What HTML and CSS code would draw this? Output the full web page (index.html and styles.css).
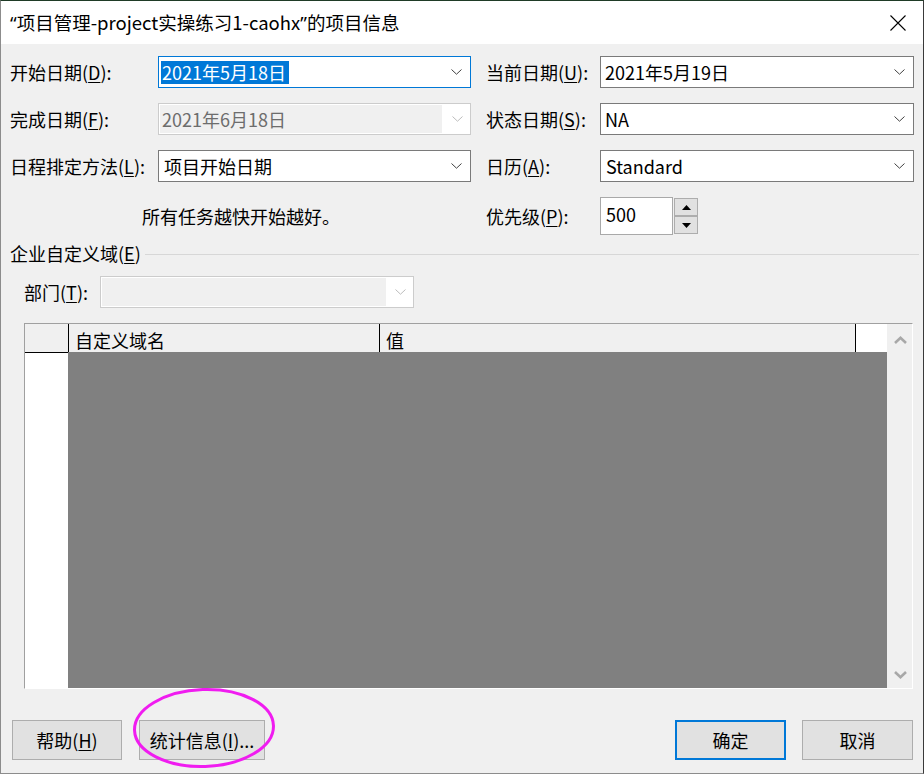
FILE: index.html
```html
<!DOCTYPE html>
<html lang="zh-CN">
<head>
<meta charset="utf-8">
<title>项目信息</title>
<link rel="stylesheet" href="styles.css">
</head>
<body>
<div class="window">
  <div class="titlebar">
    <span class="title"><span class="q">“</span>项目管理-project实操练习1-caohx<span class="q">”</span>的项目信息</span>
    <svg class="close" width="16" height="16" viewBox="0 0 16 16"><path d="M0.5 0.5L15.5 15.5M15.5 0.5L0.5 15.5" stroke="#000" stroke-width="1.1" fill="none"/></svg>
  </div>
  <div class="content">
    <div class="form">
      <div class="lbl">开始日期(<u>D</u>):</div>
      <div class="combo focus"><span class="val sel">2021年5月18日</span><svg class="chev" width="11" height="6" viewBox="0 0 11 6"><path d="M0.5 0.5L5.5 5.2L10.5 0.5" stroke="#404040" fill="none"/></svg></div>
      <div class="lbl right">当前日期(<u>U</u>):</div>
      <div class="combo"><span class="val">2021年5月19日</span><svg class="chev" width="11" height="6" viewBox="0 0 11 6"><path d="M0.5 0.5L5.5 5.2L10.5 0.5" stroke="#404040" fill="none"/></svg></div>

      <div class="lbl">完成日期(<u>F</u>):</div>
      <div class="combo disabled"><span class="val dis">2021年6月18日</span><span class="dropzone"><svg class="chev" width="11" height="6" viewBox="0 0 11 6"><path d="M0.5 0.5L5.5 5.2L10.5 0.5" stroke="#bcbcbc" fill="none"/></svg></span></div>
      <div class="lbl right">状态日期(<u>S</u>):</div>
      <div class="combo"><span class="val">NA</span><svg class="chev" width="11" height="6" viewBox="0 0 11 6"><path d="M0.5 0.5L5.5 5.2L10.5 0.5" stroke="#404040" fill="none"/></svg></div>

      <div class="lbl">日程排定方法(<u>L</u>):</div>
      <div class="combo"><span class="val pad">项目开始日期</span><svg class="chev" width="11" height="6" viewBox="0 0 11 6"><path d="M0.5 0.5L5.5 5.2L10.5 0.5" stroke="#404040" fill="none"/></svg></div>
      <div class="lbl right">日历(<u>A</u>):</div>
      <div class="combo"><span class="val pad">Standard</span><svg class="chev" width="11" height="6" viewBox="0 0 11 6"><path d="M0.5 0.5L5.5 5.2L10.5 0.5" stroke="#404040" fill="none"/></svg></div>

      <div class="note">所有任务越快开始越好。</div>
      <div class="lbl right">优先级(<u>P</u>):</div>
      <div class="spin">
        <div class="spin-input">500</div>
        <div class="spin-btns">
          <div class="spin-btn"><svg width="9" height="5" viewBox="0 0 9 5"><path d="M0 5L4.5 0L9 5Z" fill="#000"/></svg></div>
          <div class="spin-btn"><svg width="9" height="5" viewBox="0 0 9 5"><path d="M0 0L4.5 5L9 0Z" fill="#000"/></svg></div>
        </div>
      </div>
    </div>

    <div class="group">
      <span class="group-title">企业自定义域(<u>E</u>)</span>
      <div class="rule"></div>
    </div>

    <div class="dept">
      <div class="dept-lbl">部门(<u>T</u>):</div>
      <div class="combo disabled dept-combo"><span class="val dis"></span><span class="dropzone"><svg class="chev" width="11" height="6" viewBox="0 0 11 6"><path d="M0.5 0.5L5.5 5.2L10.5 0.5" stroke="#bcbcbc" fill="none"/></svg></span></div>
    </div>

    <div class="grid">
      <div class="grid-main">
        <div class="ghead">
          <div class="rh"></div>
          <div class="hc c1">自定义域名</div>
          <div class="hc c2">值</div>
          <div class="hfill"></div>
        </div>
        <div class="gbody">
          <div class="rhcol"></div>
          <div class="gray"></div>
        </div>
      </div>
      <div class="vscroll">
        <svg width="13" height="8" viewBox="0 0 13 8"><path d="M1 7L6.5 1.8L12 7" stroke="#a8a8a8" stroke-width="2.6" fill="none"/></svg>
        <svg width="13" height="8" viewBox="0 0 13 8"><path d="M1 1L6.5 6.2L12 1" stroke="#a8a8a8" stroke-width="2.6" fill="none"/></svg>
      </div>
    </div>

    <div class="buttons">
      <div class="btn-group">
        <div class="btn w110">帮助(<u>H</u>)</div>
        <div class="btn w126">统计信息(<u>I</u>)...</div>
      </div>
      <div class="btn-group g16">
        <div class="btn w111 default">确定</div>
        <div class="btn w111">取消</div>
      </div>
    </div>
  </div>
  <svg class="annot" width="150" height="88" viewBox="0 0 150 88"><ellipse cx="75" cy="44" rx="69.5" ry="38.5" transform="rotate(-2 75 44)" stroke="#f01cf0" stroke-width="3" fill="none"/></svg>
</div>
</body>
</html>
```

FILE: styles.css
```css
* { box-sizing: border-box; }
html, body { margin: 0; padding: 0; }
body {
  width: 924px;
  height: 774px;
  overflow: hidden;
  background: #f0f0f0;
  font-family: "Noto Sans CJK SC", "Microsoft YaHei", sans-serif;
  font-size: 18px;
  color: #000;
}
u { text-decoration: underline; text-underline-offset: 2px; text-decoration-thickness: 1px; }

.window {
  position: relative;
  width: 924px;
  height: 774px;
  background: #f0f0f0;
  border-top: 1px solid #1f3b26;
  border-left: 1px solid #8c8c8c;
  border-right: 1px solid #3a3a3a;
  border-bottom: 1px solid #8c8c8c;
  display: flex;
  flex-direction: column;
}

.titlebar {
  height: 43px;
  background: #fff;
  display: flex;
  align-items: center;
  justify-content: space-between;
  padding: 0 17px 0 9px;
  flex: none;
}
.title { font-size: 18.5px; line-height: 1; white-space: nowrap; }
.q { font-family: "Noto Sans", "Liberation Sans", sans-serif; }
.close { display: block; }

.content {
  display: flex;
  flex-direction: column;
  flex: 1;
}

.form {
  display: grid;
  grid-template-columns: 148px 313px 129px 314px;
  grid-template-rows: 32px 32px 32px 38px;
  row-gap: 15px;
  margin-top: 12px;
  padding-left: 9px;
}
.lbl {
  display: flex;
  align-items: center;
  line-height: 1;
  white-space: nowrap;
}
.lbl.right { padding-left: 15px; }

.combo {
  display: flex;
  align-items: center;
  justify-content: space-between;
  border: 1px solid #7a7a7a;
  background: #fff;
  height: 32px;
}
.combo.focus { border-color: #0078d7; }
.combo .chev { margin-right: 8px; flex: none; }
.val {
  line-height: 23px;
  height: 23px;
  padding: 0 0 0 4px;
  white-space: nowrap;
}
.val.pad { padding-left: 5px; }
.val.sel {
  background: #0078d7;
  color: #fff;
  margin-left: 2px;
  padding: 0 3px 0 1px;
}
.combo.disabled {
  border-color: #cccccc;
  background: #fff;
  padding: 1px 0 1px 1px;
  align-items: stretch;
}
.combo.disabled .val.dis {
  flex: 1;
  background: #f0f0f0;
  color: #6d6d6d;
  height: auto;
  display: flex;
  align-items: center;
  padding-left: 2px;
}
.dropzone {
  width: 28px;
  display: flex;
  align-items: center;
  justify-content: flex-end;
  background: #fff;
}
.dropzone .chev { margin-right: 7px; }

.note {
  grid-column: 1 / 3;
  display: flex;
  align-items: center;
  padding-left: 132px;
  line-height: 1;
}
.spin {
  display: flex;
  gap: 1px;
  height: 38px;
}
.spin-input {
  width: 73px;
  height: 38px;
  border: 1px solid #a9a9a9;
  background: #fff;
  display: flex;
  align-items: center;
  padding-left: 5px;
  padding-bottom: 4px;
  line-height: 1;
}
.spin-btns {
  display: flex;
  flex-direction: column;
  padding-top: 1px;
}
.spin-btn {
  width: 24px;
  height: 18px;
  background: #e1e1e1;
  border: 1px solid #adadad;
  display: flex;
  align-items: center;
  justify-content: center;
}

.group {
  display: flex;
  align-items: center;
  height: 20px;
  margin-top: 8px;
  padding-left: 9px;
  padding-right: 4px;
  gap: 4px;
}
.group-title { line-height: 1; white-space: nowrap; }
.rule { flex: 1; height: 1px; background: #d7d7d7; margin-top: 2px; }

.dept {
  display: flex;
  margin-top: 13px;
  padding-left: 23px;
  height: 32px;
}
.dept-lbl {
  width: 76px;
  display: flex;
  align-items: center;
  line-height: 1;
}
.dept-combo { width: 314px; }
.dept-combo .dropzone { width: 27px; }

.grid {
  margin: 15px 0 0 23px;
  width: 889px;
  height: 366px;
  border-top: 1px solid #a0a0a0;
  border-left: 1px solid #a0a0a0;
  border-right: 1px solid #ffffff;
  border-bottom: 1px solid #ffffff;
  display: flex;
}
.grid-main {
  width: 862px;
  display: flex;
  flex-direction: column;
}
.ghead {
  display: flex;
  height: 28px;
  background: #f0f0f0;
}
.rh { width: 44px; border-right: 1px solid #000; }
.hc {
  border-right: 1px solid #000;
  padding-left: 6px;
  display: flex;
  align-items: center;
  padding-top: 4px;
  line-height: 1;
  white-space: nowrap;
}
.c1 { width: 311px; }
.c2 { width: 476px; }
.hfill { width: 31px; background: #fff; }
.gbody { flex: 1; display: flex; }
.rhcol {
  width: 43px;
  background: #fff;
  border-top: 1px solid #000;
}
.gray { flex: 1; background: #808080; }

.vscroll {
  width: 25px;
  background: #f0f0f0;
  display: flex;
  flex-direction: column;
  justify-content: space-between;
  align-items: center;
  padding: 12px 0 9px 1px;
}
.vscroll svg { display: block; }

.buttons {
  display: flex;
  justify-content: space-between;
  margin-top: 31px;
  padding: 0 10px 0 11px;
}
.btn-group { display: flex; gap: 17px; }
.btn-group.g16 { gap: 16px; }
.btn {
  height: 40px;
  background: #e1e1e1;
  border: 1px solid #adadad;
  display: flex;
  align-items: center;
  justify-content: center;
  line-height: 1;
  white-space: nowrap;
}
.btn.default { border: 2px solid #0078d7; }
.w110 { width: 110px; }
.w126 { width: 126px; }
.w111 { width: 111px; }

.annot {
  position: absolute;
  left: 128px;
  top: 683px;
  pointer-events: none;
}
```
